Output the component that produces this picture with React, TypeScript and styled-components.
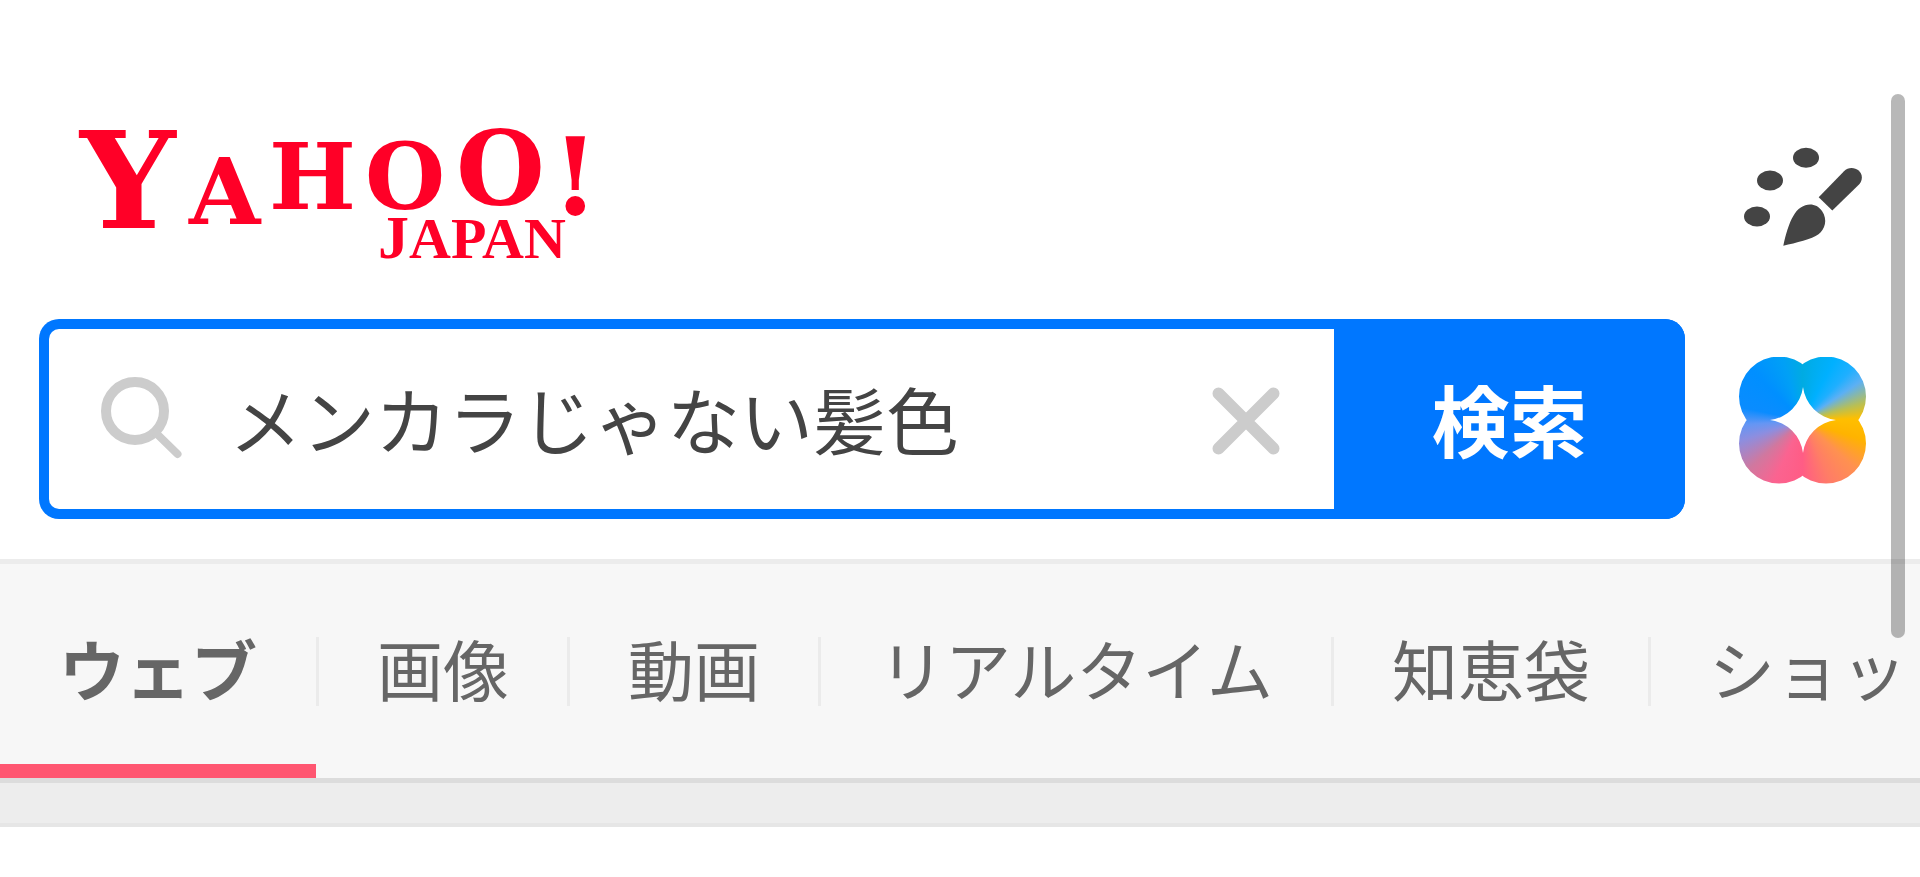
import React, { useState } from "react";
import styled, { createGlobalStyle } from "styled-components";

const GlobalStyle = createGlobalStyle`
  *, *::before, *::after { box-sizing: border-box; }
  html, body { margin: 0; padding: 0; background: #fff; }
  body {
    font-family: "Noto Sans CJK JP", sans-serif;
    color: #444;
    overflow: hidden;
  }
`;

const Page = styled.div`
  position: relative;
  width: 100%;
`;

const Header = styled.header`
  padding: 132px 54px 40px 39px;
`;

const BrandRow = styled.div`
  display: flex;
  justify-content: space-between;
  align-items: flex-start;
  height: 187px;
  padding: 0 4px 0 37px;
`;

const LogoLink = styled.a`
  display: block;
  line-height: 0;
  text-decoration: none;
`;

const LogoSvg = styled.svg`
  display: block;
  overflow: visible;
  fill: #ff0027;
  font-weight: 700;
`;

const IconButton = styled.button`
  display: block;
  flex: none;
  border: 0;
  padding: 0;
  background: none;
  cursor: pointer;
  line-height: 0;
`;

const ThemeButton = styled(IconButton)`
  margin-top: 15px;
`;

const SearchRow = styled.div`
  display: flex;
  align-items: center;
  gap: 54px;
`;

const SearchForm = styled.form`
  display: flex;
  flex: 1;
  min-width: 0;
  height: 200px;
  border-radius: 20px;
  background: #0077ff;
`;

const Field = styled.div`
  display: flex;
  flex: 1;
  align-items: center;
  min-width: 0;
  margin: 10px 0 10px 10px;
  padding: 0 54px 0 52px;
  border-radius: 10px 0 0 10px;
  background: #fff;
`;

const SearchInput = styled.input`
  flex: 1;
  min-width: 0;
  height: 120px;
  margin: 0 0 4px 47px;
  padding: 0;
  border: 0;
  outline: 0;
  background: transparent;
  color: #444;
  font-family: inherit;
  font-size: 73px;
  line-height: 120px;
`;

const ClearButton = styled(IconButton)`
  margin-top: 4px;
`;

const SubmitButton = styled.button`
  flex: none;
  width: 351px;
  border: 0;
  padding: 0 0 2px;
  border-radius: 0 20px 20px 0;
  background: #0077ff;
  color: #fff;
  font-family: inherit;
  font-size: 78px;
  font-weight: 700;
  line-height: 120px;
  cursor: pointer;
`;

const Petals = styled.span`
  display: grid;
  place-items: center;
  width: 127px;
  height: 127px;
  margin-top: 2px;
  background: conic-gradient(
    #00abe2 0deg,
    #00b0ff 28deg,
    #1fafff 44deg,
    #5cb0f4 56deg,
    #b8bf55 74deg,
    #ffbf00 88deg,
    #ffb300 108deg,
    #ff9150 132deg,
    #ff7d66 155deg,
    #ff5c85 180deg,
    #fb6390 205deg,
    #d0789f 228deg,
    #8c8ee0 252deg,
    #6496f4 266deg,
    #0a8cff 282deg,
    #008fff 315deg,
    #00a0f6 342deg,
    #00abe2 360deg
  );
  clip-path: path(
    "M0 40a40 40 0 1 1 80 0a40 40 0 1 1 -80 0ZM47 40a40 40 0 1 1 80 0a40 40 0 1 1 -80 0ZM0 87a40 40 0 1 1 80 0a40 40 0 1 1 -80 0ZM47 87a40 40 0 1 1 80 0a40 40 0 1 1 -80 0Z"
  );
`;

const Nav = styled.nav`
  border-top: 5px solid #ececec;
  border-bottom: 5px solid #dcdcdc;
  background: #f7f7f7;
  overflow: hidden;
`;

const TabList = styled.ul`
  display: flex;
  margin: 0;
  padding: 0;
  list-style: none;
`;

const Tab = styled.li`
  display: flex;
  flex: none;
  align-items: center;

  & + &::before {
    content: "";
    width: 3px;
    height: 69px;
    background: #ebebeb;
  }
`;

const TabLink = styled.a<{ $active?: boolean }>`
  display: block;
  height: 214px;
  padding: 0 ${(p) => (p.$active ? 59 : 58)}px;
  border-bottom: 14px solid ${(p) => (p.$active ? "#ff5671" : "transparent")};
  color: #666;
  font-size: 66px;
  font-weight: ${(p) => (p.$active ? 700 : 400)};
  line-height: 206px;
  white-space: nowrap;
  text-decoration: none;
`;

const SectionGap = styled.div`
  height: 44px;
  border-bottom: 4px solid #e6e6e6;
  background: #ededed;
`;

const ScrollThumb = styled.div`
  position: absolute;
  top: 94px;
  right: 15px;
  width: 14px;
  height: 544px;
  border-radius: 7px;
  background: rgba(0, 0, 0, 0.28);
`;

const tabs = ["ウェブ", "画像", "動画", "リアルタイム", "知恵袋", "ショッ"];

function Logo() {
  return (
    <LogoSvg width="512" height="136" viewBox="0 0 512 136" role="img" aria-label="Yahoo! Japan">
      <text fontFamily='"DejaVu Serif", serif'>
        <tspan x="4" y="96" fontSize="134">Y</tspan>
        <tspan x="113" y="92" fontSize="92">A</tspan>
        <tspan x="193" y="77" fontSize="92">H</tspan>
        <tspan x="289" y="77" fontSize="92">O</tspan>
        <tspan x="380" y="73" fontSize="102">O</tspan>
        <tspan x="476" y="82" fontSize="106">!</tspan>
      </text>
      <text fontFamily='"Liberation Serif", serif'>
        <tspan x="302" y="126" fontSize="62">J</tspan>
        <tspan fontSize="58">APAN</tspan>
      </text>
    </LogoSvg>
  );
}

function PaletteIcon() {
  return (
    <svg width="118" height="100" viewBox="24 67 118 100" fill="#444" aria-hidden="true">
      <ellipse cx="86" cy="77.7" rx="13" ry="10" />
      <ellipse cx="50" cy="100.5" rx="13" ry="10" />
      <ellipse cx="37" cy="136.5" rx="13" ry="10" />
      <path d="M98.7 117.3L124 91.2C131 84 145 90 141.2 101C140.500 103 139.500 104 138 105.500L112.300 130.500Z" />
      <path d="M63.300 165.700C65.500 155 69 143 73.300 136C80 123 95 120.500 102 131C108 140 105 149 98.500 154.300C92 159 76 163 63.300 165.700Z" />
    </svg>
  );
}

function SearchIcon() {
  return (
    <svg width="81" height="84" viewBox="0 0 81 84" fill="none" stroke="#ccc" aria-hidden="true">
      <circle cx="34" cy="34" r="29" strokeWidth="10" />
      <path d="M55 56L76.500 77" strokeWidth="8" strokeLinecap="round" />
    </svg>
  );
}

function ClearIcon() {
  return (
    <svg width="68" height="68" viewBox="0 0 68 68" fill="none" stroke="#ccc" strokeWidth="12" strokeLinecap="round" aria-hidden="true">
      <path d="M6.500 6.500L61.500 61.500M61.500 6.500L6.500 61.500" />
    </svg>
  );
}

export default function App() {
  const [query, setQuery] = useState("メンカラじゃない髪色");
  return (
    <Page>
      <GlobalStyle />
      <Header>
        <BrandRow>
          <LogoLink href="#">
            <Logo />
          </LogoLink>
          <ThemeButton type="button" aria-label="きせかえ">
            <PaletteIcon />
          </ThemeButton>
        </BrandRow>
        <SearchRow>
          <SearchForm role="search" onSubmit={(e) => e.preventDefault()}>
            <Field>
              <SearchIcon />
              <SearchInput
                type="text"
                aria-label="検索キーワード"
                value={query}
                onChange={(e) => setQuery(e.target.value)}
              />
              <ClearButton type="button" aria-label="クリア" onClick={() => setQuery("")}>
                <ClearIcon />
              </ClearButton>
            </Field>
            <SubmitButton type="submit">検索</SubmitButton>
          </SearchForm>
          <IconButton type="button" aria-label="AIアシスタント">
            <Petals>
              <svg width="66" height="66" viewBox="-33 -33 66 66" fill="#fff" aria-hidden="true">
                <path d="M0 -33A38 38 0 0 0 33 0A38 38 0 0 0 0 33A38 38 0 0 0 -33 0A38 38 0 0 0 0 -33Z" />
              </svg>
            </Petals>
          </IconButton>
        </SearchRow>
      </Header>
      <Nav aria-label="検索カテゴリ">
        <TabList>
          {tabs.map((label, i) => (
            <Tab key={label}>
              <TabLink href="#" $active={i === 0} aria-current={i === 0 ? "page" : undefined}>
                {label}
              </TabLink>
            </Tab>
          ))}
        </TabList>
      </Nav>
      <SectionGap />
      <ScrollThumb />
    </Page>
  );
}
